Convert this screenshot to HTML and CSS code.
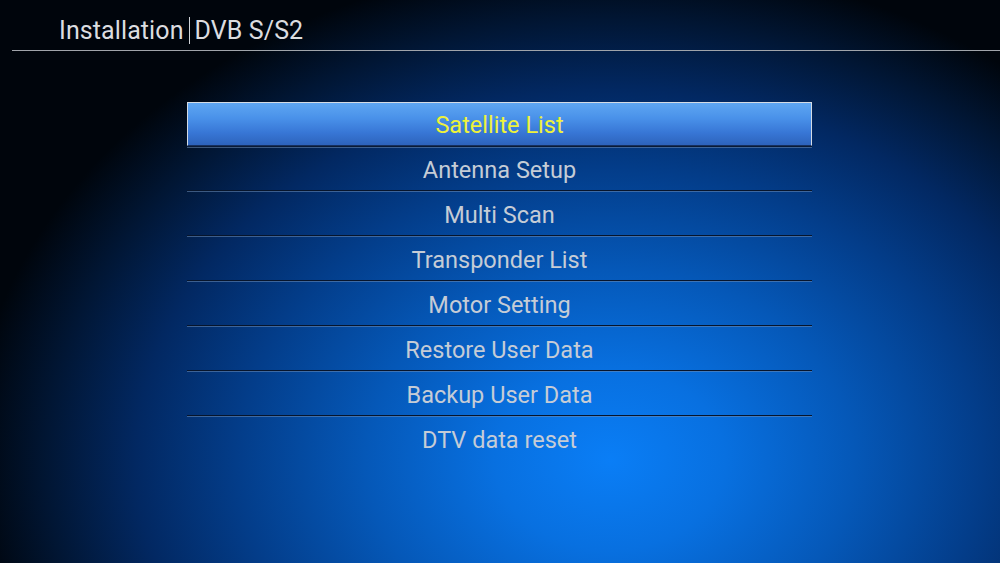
FILE: index.html
```html
<!DOCTYPE html>
<html>
<head>
<meta charset="utf-8">
<link rel="stylesheet" href="styles.css">
</head>
<body>
<div class="screen">
  <div class="header">
    <span class="title">Installation</span><span class="divider"></span><span class="title">DVB S/S2</span>
  </div>
  <ul class="menu">
    <li class="item selected">Satellite List</li>
    <li class="item">Antenna Setup</li>
    <li class="item">Multi Scan</li>
    <li class="item">Transponder List</li>
    <li class="item">Motor Setting</li>
    <li class="item">Restore User Data</li>
    <li class="item">Backup User Data</li>
    <li class="item last">DTV data reset</li>
  </ul>
</div>
</body>
</html>
```

FILE: styles.css
```css
html, body {
  margin: 0;
  padding: 0;
  width: 1000px;
  height: 563px;
  overflow: hidden;
}
.screen {
  width: 1000px;
  height: 563px;
  font-family: Roboto, "Liberation Sans", sans-serif;
  background:
    radial-gradient(ellipse 640px 500px at 610px 460px,
      #0a7ef6 0%, #0870e0 18%, #0558b8 38%, #033d8a 58%, #022862 74%, #011634 88%, #00050c 100%);
  background-color: #000;
}
.header {
  margin-left: 12px;
  padding-left: 47px;
  height: 51px;
  border-bottom: 1px solid #a0a4aa;
  display: flex;
  align-items: center;
  box-sizing: border-box;
  padding-top: 10px;
}
.title {
  color: #dcdde0;
  font-size: 25px;
  letter-spacing: 0.1px;
}
.divider {
  display: inline-block;
  width: 1px;
  height: 27px;
  background: #cfd2d6;
  margin: 0 5px 0 5px;
}
.menu {
  list-style: none;
  margin: 51px 0 0 187px;
  padding: 0;
  width: 625px;
}
.item {
  height: 43px;
  line-height: 46px;
  text-align: center;
  font-size: 23.5px;
  color: #c5ccd6;
  border-bottom: 1px solid #07152c;
  box-shadow: 0 1px 0 rgba(110, 140, 180, 0.55);
  margin-bottom: 1px;
}
.item.last {
  border-bottom: none;
  box-shadow: none;
}
.item.selected {
  color: #eef23a;
  box-sizing: border-box;
  height: 44px;
  line-height: 44px;
  border: 1px solid #d4dbe4;
  border-bottom: 1px solid #16305e;
  background: linear-gradient(to bottom, #5ea6f2 0%, #4a92ea 35%, #3877d6 70%, #2d63bc 100%);
  box-shadow: 0 1px 0 #0a1a36, 0 2px 0 rgba(110, 140, 180, 0.55);
  margin-bottom: 1px;
}
```
